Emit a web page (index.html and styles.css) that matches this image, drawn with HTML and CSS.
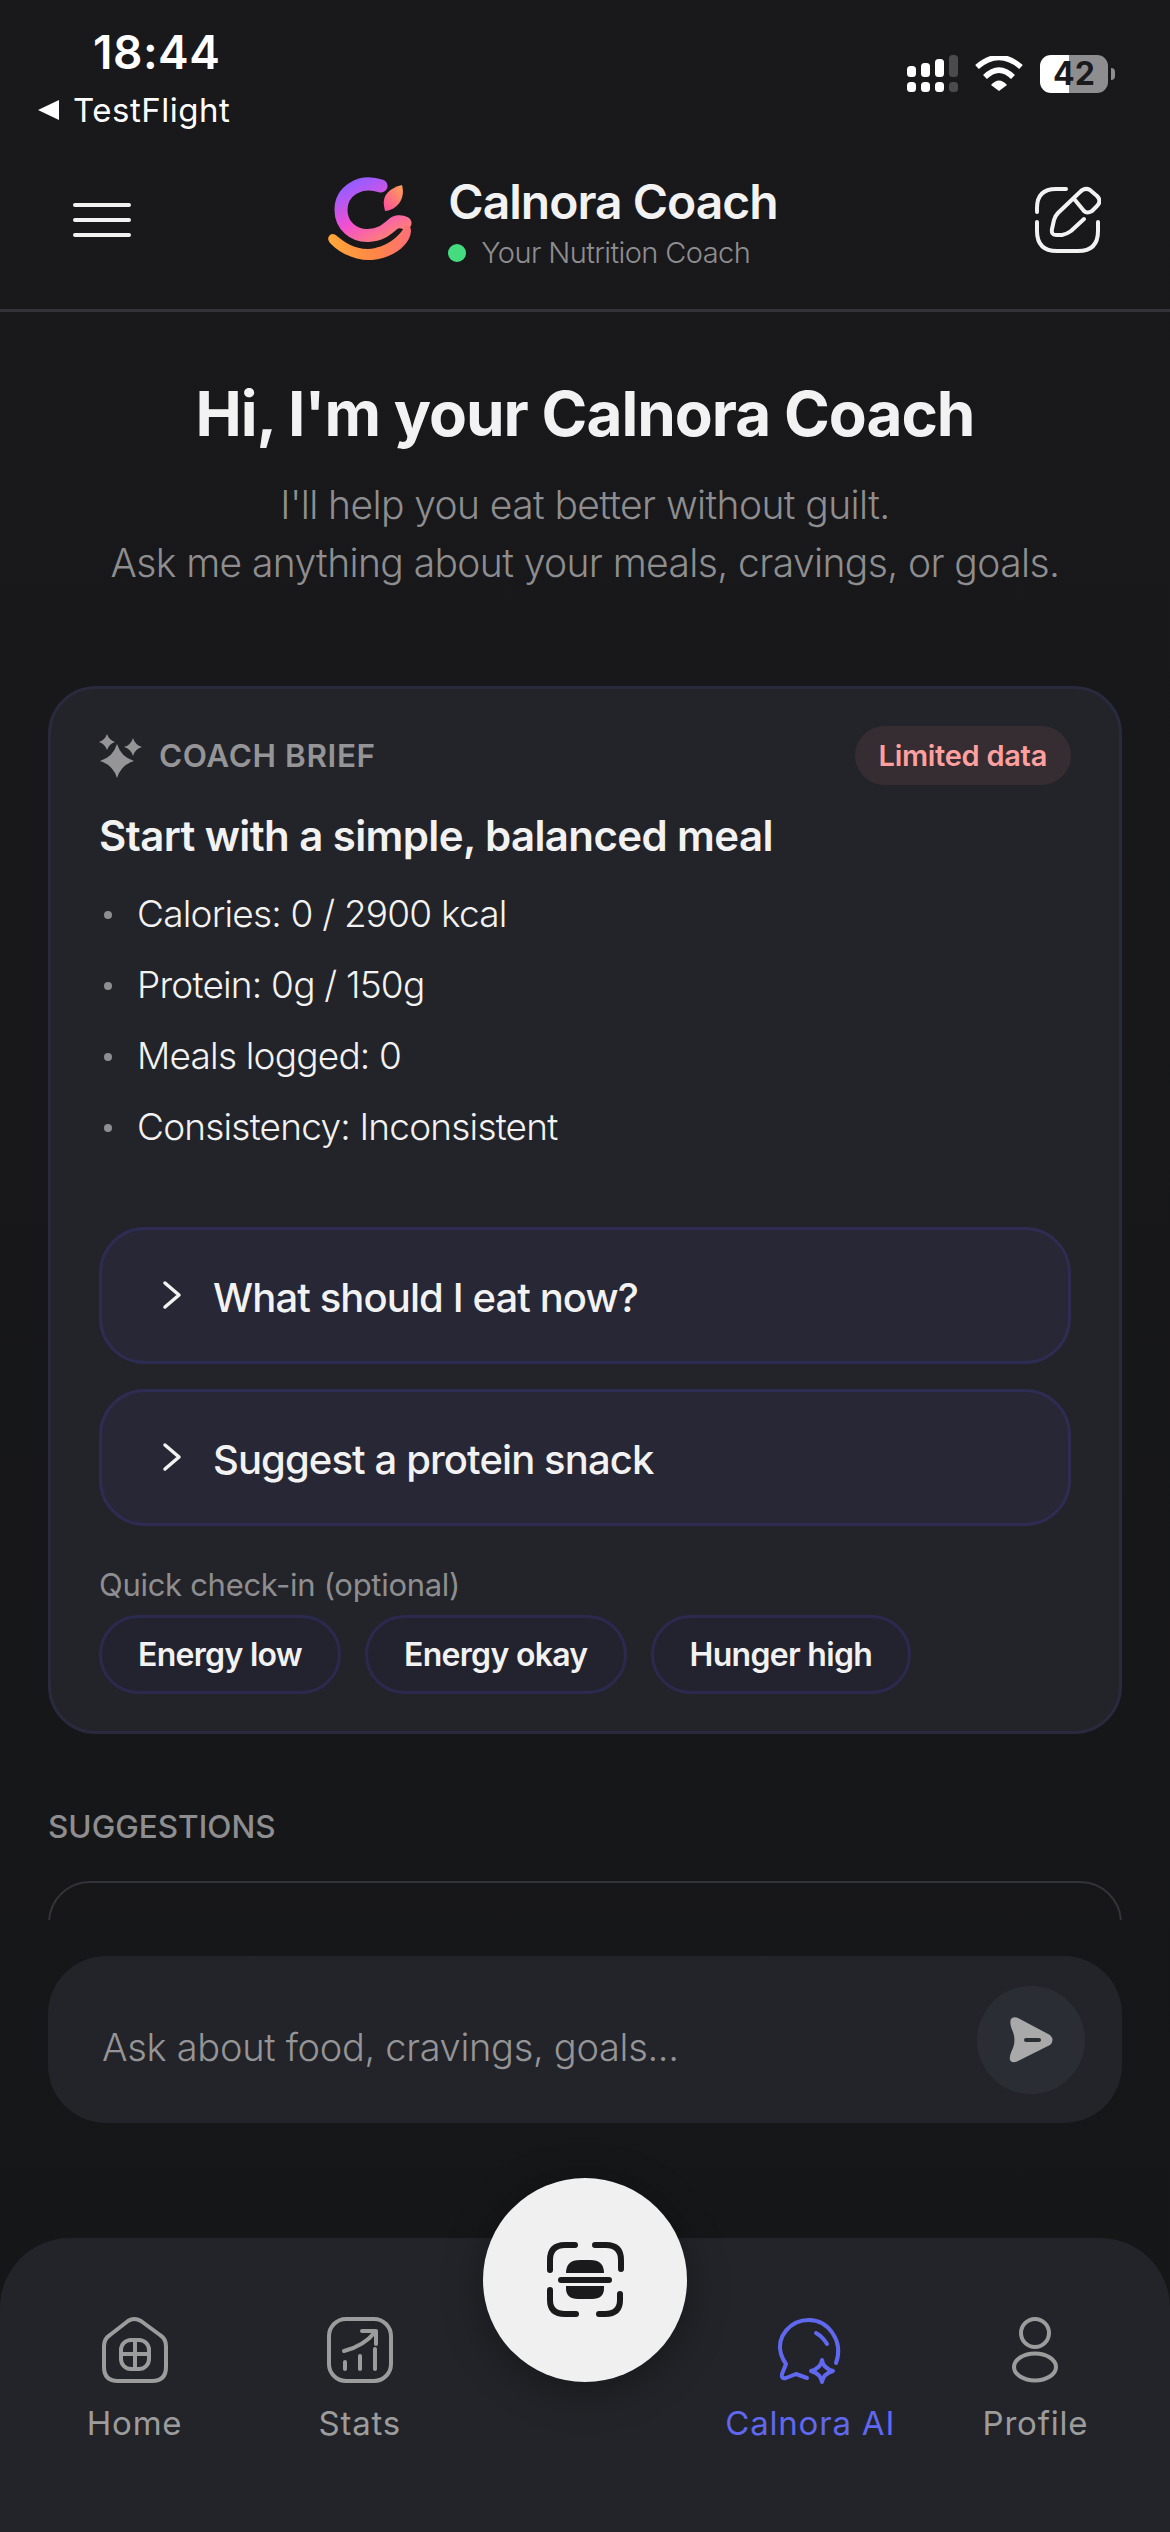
FILE: index.html
```html
<!DOCTYPE html>
<html lang="en">
<head>
    <meta charset="UTF-8">
    <meta name="viewport" content="width=device-width, initial-scale=1.0">
    <title>Calnora Coach</title>
    <link rel="stylesheet" href="styles.css">
</head>
<body>
    <div class="app">
        <div class="status-bar">
            <div class="status-left">
                <div class="clock">18:44</div>
                <div class="back-link"><span class="back-arrow"></span>TestFlight</div>
            </div>
            <div class="status-right">
                <svg class="signal" width="51" height="38" viewBox="27 26 51 38" fill="#fff">
                    <rect x="27" y="37" width="9" height="11" rx="3.5"/>
                    <rect x="41" y="34" width="9" height="14" rx="3.5"/>
                    <rect x="55" y="30" width="9" height="18" rx="3.5"/>
                    <rect x="69" y="26" width="9" height="22" rx="3.5" fill="#4b4b4e"/>
                    <rect x="27" y="53" width="9" height="10" rx="3.5"/>
                    <rect x="41" y="53" width="9" height="10" rx="3.5"/>
                    <rect x="55" y="53" width="9" height="10" rx="3.5"/>
                    <rect x="69" y="53" width="9" height="10" rx="3.5" fill="#4b4b4e"/>
                </svg>
                <svg class="wifi" width="48" height="36" viewBox="95 26 48 36" fill="none" stroke="#fff" stroke-width="5.5">
                    <path d="M97 37 Q119 18 141 37"/>
                    <path d="M105 47 Q119 33 133 47"/>
                    <path d="M111 55 L119 61 L127 55 Q119 46 111 55 Z" fill="#fff" stroke="none"/>
                </svg>
                <div class="battery">42</div>
                <span class="battery-nub"></span>
            </div>
        </div>

        <header class="top-bar">
            <div class="menu-icon"><span></span><span></span><span></span></div>
            <div class="brand">
                <svg class="logo" width="90" height="88" viewBox="25 26 90 88">
                    <defs>
                        <linearGradient id="logoRing" x1="0.2" y1="0" x2="0.8" y2="1">
                            <stop offset="0" stop-color="#9a5cff"/>
                            <stop offset="0.55" stop-color="#f24fd0"/>
                            <stop offset="1" stop-color="#ff7f78"/>
                        </linearGradient>
                        <linearGradient id="logoSwoosh" x1="0" y1="0" x2="1" y2="0">
                            <stop offset="0" stop-color="#ffa838"/>
                            <stop offset="0.6" stop-color="#ff8448"/>
                            <stop offset="1" stop-color="#ff6f7a"/>
                        </linearGradient>
                        <linearGradient id="logoLeaf" x1="1" y1="0" x2="0" y2="1">
                            <stop offset="0" stop-color="#ffa552"/>
                            <stop offset="1" stop-color="#ff4aa0"/>
                        </linearGradient>
                    </defs>
                    <path d="M81 36 C60 29 41 41 41 60 C41 76 54 86 68 85.5 C80 85 86 80 92 75 C96 71 101 71 105 73" fill="none" stroke="url(#logoRing)" stroke-width="13" stroke-linecap="round"/>
                    <path d="M30 85 C27 88 28 91 31 94 C42 105 58 111 72 110 C92 108 110 96 111 81 C111 76 108 74 105 76 C100 86 86 98 68 99 C54 99 44 92 37 86 C35 84 32 83 30 85 Z" fill="url(#logoSwoosh)"/>
                    <path d="M102 35 C90 38 82 45 84 56 L85 61 C96 60 106 50 102 35 Z" fill="url(#logoLeaf)"/>
                </svg>
                <div class="brand-text">
                    <div class="brand-name">Calnora Coach</div>
                    <div class="brand-sub"><span class="online-dot"></span>Your Nutrition Coach</div>
                </div>
            </div>
            <svg class="edit-icon" width="66" height="68" viewBox="155 155 66 68" fill="none" stroke="#f2f2f2" stroke-width="4" stroke-linecap="round" stroke-linejoin="round">
                <path d="M186 158 H176 Q157 158 157 177 V181"/>
                <path d="M218 191 V200 Q218 220 198 220 H177 Q157 220 157 200 V191"/>
                <path d="M204 188 L191 200 Q187 203 182 204 L176 204 Q171 204 172 198 L174 189 Q175 185 178 182 L200 161 Q205 156 210 159 L217 165 Q222 170 217 175 L212 180 Q207 183 204 180 L195 169"/>
            </svg>
        </header>

        <main class="content">
            <section class="intro">
                <h1>Hi, I'm your Calnora Coach</h1>
                <p>I'll help you eat better without guilt.<br>Ask me anything about your meals, cravings, or goals.</p>
            </section>

            <section class="brief-card">
                <div class="brief-head">
                    <div class="brief-label">
                        <svg width="44" height="44" viewBox="18 23 44 44" fill="#959597">
                            <path d="M36 33 Q40 46 53 50 Q40 54 36 67 Q32 54 19 50 Q32 46 36 33 Z"/>
                            <path d="M26 23 Q28 29 34 31 Q28 33 26 39 Q24 33 18 31 Q24 29 26 23 Z"/>
                            <path d="M52 27 Q54 34 61 36 Q54 38 52 45 Q50 38 43 36 Q50 34 52 27 Z"/>
                        </svg>
                        COACH BRIEF
                    </div>
                    <div class="data-pill">Limited data</div>
                </div>
                <h2>Start with a simple, balanced meal</h2>
                <ul class="brief-list">
                    <li>Calories: 0 / 2900 kcal</li>
                    <li>Protein: 0g / 150g</li>
                    <li>Meals logged: 0</li>
                    <li>Consistency: Inconsistent</li>
                </ul>
                <div class="prompt-btn">
                    <svg width="20" height="30" viewBox="0 0 20 30" fill="none" stroke="#f2f2f2" stroke-width="3.5" stroke-linecap="round" stroke-linejoin="round"><path d="M3 3 L17 15 L3 27"/></svg>
                    What should I eat now?
                </div>
                <div class="prompt-btn">
                    <svg width="20" height="30" viewBox="0 0 20 30" fill="none" stroke="#f2f2f2" stroke-width="3.5" stroke-linecap="round" stroke-linejoin="round"><path d="M3 3 L17 15 L3 27"/></svg>
                    Suggest a protein snack
                </div>
                <div class="checkin-label">Quick check-in (optional)</div>
                <div class="chips">
                    <div class="chip">Energy low</div>
                    <div class="chip">Energy okay</div>
                    <div class="chip">Hunger high</div>
                </div>
            </section>

            <div class="section-label">SUGGESTIONS</div>
            <div class="suggestion-card"></div>
        </main>

        <div class="composer">
            <span class="composer-text">Ask about food, cravings, goals...</span>
            <div class="send-btn">
                <svg width="46" height="52" viewBox="53 54 46 52">
                    <path d="M56 59 Q58 56 63 58 L95 75 Q100 80 95 85 L63 101 Q57 104 55 100 Q54 96 58 88 Q61 80 58 72 Q54 63 56 59 Z" fill="#a9a9a9"/>
                    <path d="M71 80 H84" stroke="#2b2d35" stroke-width="4" stroke-linecap="round"/>
                </svg>
            </div>
        </div>

        <nav class="tab-bar">
            <div class="tab">
                <svg width="70" height="70" viewBox="32 24 70 70" fill="none" stroke="#9c9c9c" stroke-width="4" stroke-linecap="round" stroke-linejoin="round">
                    <path d="M60 30 Q66 26 73 30 L92 44 Q98 48 98 55 V76 Q98 90 84 90 H50 Q36 90 36 76 V55 Q36 48 42 44 Z"/>
                    <rect x="53" y="49" width="28" height="29" rx="10"/>
                    <path d="M67 49 V78 M53 63 H81"/>
                </svg>
                <span>Home</span>
            </div>
            <div class="tab">
                <svg width="70" height="70" viewBox="256 24 70 70" fill="none" stroke="#9c9c9c" stroke-width="4" stroke-linecap="round" stroke-linejoin="round">
                    <rect x="260" y="28" width="62" height="62" rx="17"/>
                    <path d="M275 60 Q295 55 306 41 M293 40 H307 V53"/>
                    <path d="M276 71 V78 M291 65 V78 M306 58 V78"/>
                </svg>
                <span>Stats</span>
            </div>
            <div class="tab"></div>
            <div class="tab tab-active">
                <svg width="70" height="70" viewBox="35 24 70 70" fill="none" stroke="#6068f0" stroke-width="4" stroke-linecap="round" stroke-linejoin="round">
                    <path d="M96 72 C104 50 88 29 69 29 C50 29 36 46 41 63 Q43 69 46 73 L42 83 Q41 88 46 87 L56 83 L67 87"/>
                    <path d="M76 42 Q83 46 87 53"/>
                    <path d="M82 69 Q83 77 93 80 Q83 83 82 91 Q81 83 71 80 Q81 77 82 69 Z"/>
                </svg>
                <span>Calnora AI</span>
            </div>
            <div class="tab">
                <svg width="70" height="70" viewBox="260 24 70 70" fill="none" stroke="#9c9c9c" stroke-width="4">
                    <circle cx="295" cy="42" r="14"/>
                    <ellipse cx="295" cy="76" rx="21" ry="13.5"/>
                </svg>
                <span>Profile</span>
            </div>
        </nav>

        <div class="scan-btn">
            <svg width="78" height="78" viewBox="66 71 78 78" fill="none" stroke="#1a1a1d" stroke-width="6" stroke-linecap="round">
                <path d="M95 75 H85 Q70 75 70 90 V100"/>
                <path d="M115 75 H126 Q141 75 141 90 V99"/>
                <path d="M70 120 V130 Q70 144 85 144 H96"/>
                <path d="M140 124 V130 Q140 144 125 144 H119"/>
                <path d="M81 110 H129"/>
                <path d="M86 103 Q86 90 100 90 H110 Q124 90 124 103 Z" fill="#1a1a1d" stroke="none"/>
                <path d="M86 116 H124 V118 Q124 129 112 129 H98 Q86 129 86 118 Z" fill="#1a1a1d" stroke="none"/>
            </svg>
        </div>
    </div>
</body>
</html>
```

FILE: styles.css
```css
body {
    margin: 0;
    padding: 0;
    background-color: #17181b;
    font-family: 'Inter', sans-serif;
    color: #f2f2f2;
}

.app {
    position: relative;
    width: 1170px;
    height: 2532px;
    display: flex;
    flex-direction: column;
    overflow: hidden;
    background: linear-gradient(#19191c, #151618);
}

/* status bar */
.status-bar {
    height: 150px;
    box-sizing: border-box;
    padding: 26px 55px 0 38px;
    display: flex;
    justify-content: space-between;
    align-items: flex-start;
    flex-shrink: 0;
}

.clock {
    font-size: 46px;
    font-weight: 600;
    line-height: 52px;
    margin-left: 55px;
    letter-spacing: 0.5px;
    color: #fff;
}

.back-link {
    display: flex;
    align-items: center;
    font-size: 33px;
    line-height: 40px;
    margin-top: 12px;
    letter-spacing: 0.5px;
    color: #fff;
}

.back-arrow {
    width: 0;
    height: 0;
    border-top: 10px solid transparent;
    border-bottom: 10px solid transparent;
    border-right: 21px solid #fff;
    margin-right: 14px;
}

.status-right {
    display: flex;
    align-items: center;
    margin-top: 29px;
}

.wifi {
    margin-left: 17px;
}

.battery {
    width: 68px;
    height: 38px;
    margin-left: 17px;
    border-radius: 11px;
    background: linear-gradient(90deg, #fff 43%, #8e8e90 43%);
    color: #1a1a1d;
    font-size: 32px;
    font-weight: 700;
    line-height: 38px;
    text-align: center;
}

.battery-nub {
    width: 4px;
    height: 12px;
    margin-left: 3px;
    border-radius: 0 4px 4px 0;
    background-color: #8e8e90;
}

/* header */
.top-bar {
    height: 162px;
    box-sizing: border-box;
    padding: 0 69px 20px 73px;
    display: flex;
    align-items: center;
    justify-content: space-between;
    border-bottom: 3px solid #333338;
    flex-shrink: 0;
}

.menu-icon {
    display: flex;
    flex-direction: column;
    gap: 11px;
    width: 58px;
}

.menu-icon span {
    display: block;
    height: 4px;
    border-radius: 2px;
    background-color: #f2f2f2;
}

.brand {
    display: flex;
    align-items: center;
    gap: 33px;
    margin-right: 63px;
}

.brand-text {
    padding-top: 6px;
}

.brand-name {
    font-size: 48px;
    font-weight: 600;
    line-height: 54px;
    letter-spacing: -1px;
}

.brand-sub {
    display: flex;
    align-items: center;
    font-size: 29px;
    font-weight: 300;
    line-height: 36px;
    margin-top: 6px;
    letter-spacing: -0.6px;
    color: #8e8e90;
}

.online-dot {
    width: 18px;
    height: 18px;
    border-radius: 50%;
    background-color: #45dc80;
    margin-right: 15px;
}

/* scrolling content */
.content {
    flex: 1;
    overflow: hidden;
    padding: 0 48px;
}

.intro {
    text-align: center;
    padding-top: 64px;
}

.intro h1 {
    margin: 0;
    font-size: 62px;
    font-weight: 700;
    line-height: 76px;
    letter-spacing: -1px;
}

.intro p {
    margin: 24px 0 0;
    font-size: 39px;
    font-weight: 300;
    line-height: 58px;
    letter-spacing: -0.6px;
    color: #8e8e90;
}

.brief-card {
    margin-top: 94px;
    box-sizing: border-box;
    height: 1048px;
    padding: 37px 48px 0 48px;
    background-color: #232429;
    border: 3px solid #2a2a3e;
    border-radius: 48px;
}

.brief-head {
    display: flex;
    justify-content: space-between;
    align-items: center;
}

.brief-label {
    display: flex;
    align-items: center;
    gap: 16px;
    font-size: 31.5px;
    font-weight: 600;
    letter-spacing: 0.6px;
    color: #959597;
}

.data-pill {
    height: 59px;
    padding: 0 24px;
    border-radius: 30px;
    background-color: #352d31;
    color: #ffa0a0;
    font-size: 29px;
    font-weight: 600;
    line-height: 59px;
    letter-spacing: -0.3px;
}

.brief-card h2 {
    margin: 23px 0 0;
    font-size: 42px;
    font-weight: 600;
    line-height: 56px;
    letter-spacing: -0.6px;
}

.brief-list {
    list-style: none;
    margin: 14px 0 0;
    padding: 0;
}

.brief-list li {
    position: relative;
    height: 71px;
    line-height: 71px;
    padding-left: 38px;
    font-size: 37px;
    font-weight: 300;
    letter-spacing: -0.8px;
}

.brief-list li::before {
    content: "";
    position: absolute;
    left: 5px;
    top: 33px;
    width: 8px;
    height: 8px;
    border-radius: 50%;
    background-color: #8e8e90;
}

.prompt-btn {
    box-sizing: border-box;
    height: 137px;
    margin-bottom: 25px;
    padding-top: 4px;
    padding-left: 60px;
    display: flex;
    align-items: center;
    gap: 31px;
    background-color: #272735;
    border: 3px solid #2e2c52;
    border-radius: 46px;
    font-size: 40px;
    font-weight: 500;
    letter-spacing: -0.9px;
}

.prompt-btn svg {
    margin-top: -6px;
}

.brief-list + .prompt-btn {
    margin-top: 65px;
}

.checkin-label {
    margin-top: 40px;
    font-size: 31px;
    line-height: 38px;
    letter-spacing: -0.3px;
    color: #8e8e90;
}

.chips {
    display: flex;
    gap: 24px;
    margin-top: 11px;
}

.chip {
    box-sizing: border-box;
    height: 79px;
    padding: 0 36px;
    border: 3px solid #2b2a4e;
    border-radius: 40px;
    background-color: #23232f;
    font-size: 32px;
    font-weight: 600;
    line-height: 73px;
    letter-spacing: -0.7px;
}

.section-label {
    margin-top: 74px;
    font-size: 31.5px;
    font-weight: 500;
    line-height: 38px;
    color: #8e8e90;
}

.suggestion-card {
    height: 80px;
    margin-top: 35px;
    border: 2px solid #333338;
    border-radius: 48px;
}

/* input */
.composer {
    height: 167px;
    margin: 36px 48px 0;
    padding: 0 37px 0 54px;
    box-sizing: border-box;
    display: flex;
    align-items: center;
    justify-content: space-between;
    background-color: #232429;
    border-radius: 58px;
    flex-shrink: 0;
}

.composer-text {
    padding-top: 14px;
    font-size: 38px;
    font-weight: 300;
    letter-spacing: -0.3px;
    color: #959597;
}

.send-btn {
    width: 108px;
    height: 108px;
    border-radius: 50%;
    background-color: #2b2d35;
    display: flex;
    align-items: center;
    justify-content: center;
}

/* bottom nav */
.tab-bar {
    height: 294px;
    margin-top: 115px;
    padding: 77px 22px 0;
    box-sizing: border-box;
    display: grid;
    grid-template-columns: repeat(5, 1fr);
    background-color: #232429;
    border-radius: 70px 70px 0 0;
    flex-shrink: 0;
}

.tab {
    display: flex;
    flex-direction: column;
    align-items: center;
    font-size: 33px;
    letter-spacing: 0.8px;
    color: #9c9c9c;
}

.tab span {
    margin-top: 17px;
    line-height: 42px;
}

.tab-active {
    color: #6068f0;
}

.scan-btn {
    position: absolute;
    left: 483px;
    top: 2178px;
    width: 204px;
    height: 204px;
    border-radius: 50%;
    background-color: #f0f0f0;
    box-shadow: 0 8px 40px rgba(0, 0, 0, 0.35);
    display: flex;
    align-items: center;
    justify-content: center;
}
```
